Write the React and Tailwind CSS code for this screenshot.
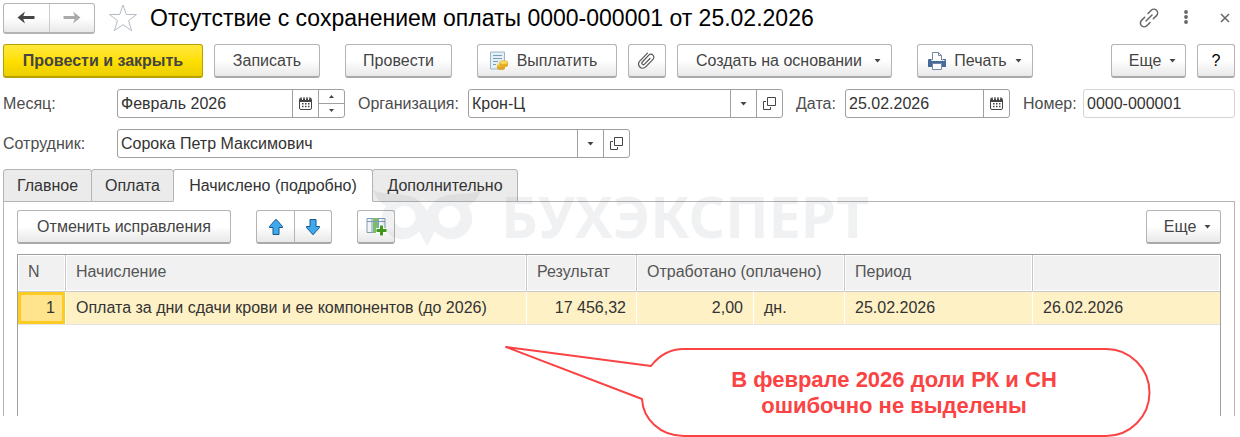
const button =
  'flex h-[34px] items-center justify-center rounded-[3px] border border-[#b4b4b4] border-b-2 border-b-[#a9a9a9] bg-linear-to-b from-white from-50% to-[#e8e8e8] text-base text-[#444]'

const field = 'flex h-[29px] rounded-[3px] border border-[#a0a0a0] bg-white'
const fieldInput = 'min-w-0 flex-1 px-[3px] text-base text-[#333] outline-none'
const fieldButton = 'flex w-[26px] items-center justify-center border-l border-[#a0a0a0]'

const TABS = [
  { title: 'Главное', width: 'w-[89px]' },
  { title: 'Оплата', width: 'w-[83px]' },
  { title: 'Начислено (подробно)', width: 'w-[200px]', active: true },
  { title: 'Дополнительно', width: 'w-[146px]' },
]

function Caret() {
  return (
    <svg width="7" height="4" viewBox="0 0 7 4" fill="#444">
      <path d="M.5 0h6L3.5 3.5z" />
    </svg>
  )
}

function CalendarIcon() {
  return (
    <svg width="13" height="14" viewBox="0 0 13 14">
      <path d="M2 1h9a1.5 1.5 0 0 1 1.5 1.5V11A1.5 1.5 0 0 1 11 12.500H2A1.5 1.5 0 0 1 .5 11V2.500A1.5 1.5 0 0 1 2 1z" fill="#fff" stroke="#444" />
      <path d="M1 1.500h11V5H1z" fill="#444" />
      <path d="M3.500 0v3M6.500 0v3M9.500 0v3" stroke="#fff" />
      <path d="M3 6.800h1.500M6 6.800h1.500M9 6.800h1.500M3 9.500h1.500M6 9.500h1.500M9 9.500h1.500" stroke="#444" strokeWidth="1.600" />
    </svg>
  )
}

function OpenIcon() {
  return (
    <svg width="13" height="13" viewBox="0 0 13 13" fill="none" stroke="#444">
      <path d="M4.500 .5h8v8h-8z" />
      <path d="M3 4.500H.5v8h7V10" />
    </svg>
  )
}

function NavArrow({ color, flip }) {
  return (
    <svg className={flip ? 'rotate-180' : ''} width="18" height="13" viewBox="0 0 18 13">
      <path d="M.5 6.500L8 .5 6.300 5H17.500V8H6.300L8 12.500z" fill={color} />
    </svg>
  )
}

function StarIcon() {
  return (
    <svg width="30" height="28" viewBox="0 0 30 28" fill="none" stroke="#b5bcc6">
      <path d="M15 1l3.300 9.500h10.200l-8 6.200 3.200 10L15 20.600l-8.700 6.100 3.200-10-8-6.200h10.200z" />
    </svg>
  )
}

function LinkIcon() {
  return (
    <svg width="20" height="20" viewBox="0 0 20 20" fill="none" stroke="#666" strokeWidth="1.500" strokeLinecap="round">
      <path d="M7 13l6-6" />
      <path d="M9 5.500l3.200-3.200a3.700 3.700 0 0 1 5.300 5.300L14.300 10.800" />
      <path d="M11 14.500l-3.200 3.200a3.700 3.700 0 0 1-5.300-5.300L5.700 9.200" />
    </svg>
  )
}

function ClipIcon() {
  return (
    <svg width="18" height="18" viewBox="0 0 18 18" fill="none" stroke="#555" strokeWidth="1.200" strokeLinecap="round">
      <path d="M12 6.500l-5.500 5.700a1.500 1.500 0 0 1-2.200-2.200l6.500-6.800a2.900 2.900 0 0 1 4.200 4.200l-7.300 7.500a4.100 4.100 0 0 1-6-5.800L9.500 1.200" />
    </svg>
  )
}

function PayIcon() {
  return (
    <svg width="20" height="20" viewBox="0 0 20 20">
      <path d="M1.500 1h14v17h-14z" fill="#e3f0f8" stroke="#9ab6ca" />
      <path d="M4 4.500h9M4 7.500h9M4 10.500h5M4 13.500h3" stroke="#7d9cb5" />
      <path d="M8 14v3c0 2.600 8 2.600 8 0v-3z" fill="#dfa520" />
      <ellipse cx="12" cy="14" rx="4" ry="1.800" fill="#f6d050" />
      <path d="M10.500 11.500v3c0 2.300 8.500 2.300 8.500 0v-3z" fill="#e5ac22" />
      <ellipse cx="14.700" cy="11.500" rx="4.300" ry="1.900" fill="#fbdc62" stroke="#d09c20" strokeWidth=".5" />
    </svg>
  )
}

function PrinterIcon() {
  return (
    <svg width="18" height="18" viewBox="0 0 18 18">
      <path d="M4.500 8V.5h6l3 3V8" fill="#fff" stroke="#7389a3" />
      <path d="M10.500 .5v3h3" fill="none" stroke="#7389a3" />
      <path d="M1 7h2.500v2h11V7H17a1 1 0 0 1 1 1v7H0V8a1 1 0 0 1 1-1z" fill="#456c98" />
      <path d="M4.500 11.500h9v6h-9z" fill="#fff" stroke="#7389a3" />
      <path d="M15 8.500h1.500" stroke="#fff" />
    </svg>
  )
}

function MoveArrow({ flip }) {
  return (
    <svg className={flip ? 'rotate-180' : ''} width="16" height="18" viewBox="0 0 16 18">
      <path d="M8 1.200l6.500 7.300v1H11v7H5v-7H1.500v-1z" fill="#3fa9ee" stroke="#17578c" strokeLinejoin="round" />
    </svg>
  )
}

function AddColumnIcon() {
  return (
    <svg width="21" height="19" viewBox="0 0 21 19">
      <path d="M1 1.500h18v14H1z" fill="#eef4f8" stroke="#7f9db3" />
      <path d="M7 1h5v15H7z" fill="#7cbc6a" />
      <path d="M1 4.500h18M6 1v15M12.500 1v15" stroke="#7f9db3" />
      <path d="M15.500 8v11M10 13.500h11" stroke="#fff" strokeWidth="5" />
      <path d="M15.500 8.500v10M10.500 13.500h10" stroke="#3f9a1c" strokeWidth="3" />
    </svg>
  )
}

function Watermark() {
  return (
    <div className="pointer-events-none absolute top-[19px] left-[370px] flex items-start gap-5 text-[#1e2337] opacity-[0.06]">
      <svg className="mt-[2px]" width="108" height="56" viewBox="0 0 108 56" fill="currentColor">
        <path
          fillRule="evenodd"
          d="M0 0C12 6 30 2 42 8Q50 13 54 21Q58 13 66 8C78 2 96 6 108 0C105 8 101 13 95 16A20 20 0 0 1 62 41L54 56 46 41A20 20 0 0 1 13 16C7 13 3 8 0 0zM31.500 16a11 11 0 1 0 0 22 11 11 0 0 0 0-22zM76.500 16a11 11 0 1 0 0 22 11 11 0 0 0 0-22z"
        />
      </svg>
      <span className="font-['Noto_Sans',sans-serif] text-[57px] leading-[56px] font-bold">БУХЭКСПЕРТ</span>
    </div>
  )
}

function Callout() {
  return (
    <div className="absolute top-[343px] left-[504px] h-[94px] w-[648px]">
      <svg width="648" height="94" viewBox="0 0 648 94" fill="#fff" stroke="#fb4343" strokeWidth="2">
        <path d="M2 4L147 23Q160 6 180 6H602A43 43 0 0 1 602 93H180C156 93 139 76 138 56z" strokeLinejoin="round" />
      </svg>
      <p className="absolute top-6 right-[78px] left-[210px] text-center text-[22px] leading-[26px] font-bold text-[#fb4343]">
        В феврале 2026 доли РК и СН ошибочно не выделены
      </p>
    </div>
  )
}

function Header() {
  return (
    <header className="flex h-[34px] items-center">
      <div className="flex h-[31px] w-[92px] rounded-[3px] border border-[#b4b4b4] border-b-2 bg-linear-to-b from-white from-50% to-[#e8e8e8]">
        <button aria-label="Назад" className="flex flex-1 items-center justify-center border-r border-[#ccc]">
          <NavArrow color="#444" />
        </button>
        <button aria-label="Вперед" className="flex flex-1 items-center justify-center">
          <NavArrow color="#aaa" flip />
        </button>
      </div>
      <button aria-label="В избранное" className="ml-[13px]"><StarIcon /></button>
      <h1 className="ml-3 flex-1 text-[23px] whitespace-nowrap text-black">Отсутствие с сохранением оплаты 0000-000001 от 25.02.2026</h1>
      <button aria-label="Ссылка"><LinkIcon /></button>
      <button aria-label="Меню" className="ml-6">
        <svg width="6" height="16" viewBox="0 0 6 16" fill="#666">
          <circle cx="3" cy="2" r="1.900" /><circle cx="3" cy="7" r="1.900" /><circle cx="3" cy="12" r="1.900" />
        </svg>
      </button>
      <button aria-label="Закрыть" className="mr-1 ml-[30px]">
        <svg width="12" height="12" viewBox="0 0 12 12" stroke="#666" strokeWidth="1.500"><path d="M2 2l8 8M10 2l-8 8" /></svg>
      </button>
    </header>
  )
}

function Toolbar() {
  return (
    <div className="mt-[9px] flex">
      <button className="flex h-[34px] w-[200px] items-center justify-center rounded-[3px] border border-[#b8a000] border-b-2 bg-linear-to-b from-[#ffe838] via-[#ffe000] to-[#ebcf00] text-base font-bold text-[#444]">
        Провести и закрыть
      </button>
      <button className={`${button} ml-[11px] w-[106px]`}>Записать</button>
      <button className={`${button} ml-[25px] w-[107px]`}>Провести</button>
      <button className={`${button} ml-[25px] w-[140px] gap-2 pr-2`}><PayIcon />Выплатить</button>
      <button aria-label="Файлы" className={`${button} ml-[11px] w-[38px]`}><ClipIcon /></button>
      <button className={`${button} ml-[11px] w-[215px] gap-3 pl-2`}>Создать на основании<Caret /></button>
      <button className={`${button} ml-[25px] w-[116px] gap-2`}><PrinterIcon />Печать<Caret /></button>
      <button className={`${button} ml-auto w-[75px] gap-2 pl-2`}>Еще<Caret /></button>
      <button aria-label="Справка" className={`${button} ml-[11px] w-[38px]`}>
        <span className="text-black">?</span>
      </button>
    </div>
  )
}

function Fields() {
  return (
    <div className="mt-[11px] flex flex-col gap-[11px] text-base text-[#4d4d4d]">
      <div className="flex items-center">
        <label htmlFor="month" className="w-[114px]">Месяц:</label>
        <div className={`${field} w-[228px]`}>
          <input id="month" className={fieldInput} defaultValue="Февраль 2026" />
          <button aria-label="Выбрать месяц" className={fieldButton}><CalendarIcon /></button>
          <div className="flex w-[26px] flex-col border-l border-[#a0a0a0]">
            <button aria-label="Следующий месяц" className="flex flex-1 items-center justify-center border-b border-[#a0a0a0]">
              <svg width="5" height="3" viewBox="0 0 5 3" fill="#444"><path d="M0 3h5L2.500 0z" /></svg>
            </button>
            <button aria-label="Предыдущий месяц" className="flex flex-1 items-center justify-center">
              <svg width="5" height="3" viewBox="0 0 5 3" fill="#444"><path d="M0 0h5L2.500 3z" /></svg>
            </button>
          </div>
        </div>
        <label htmlFor="org" className="ml-[13px] w-[110px]">Организация:</label>
        <div className={`${field} min-w-0 flex-1`}>
          <input id="org" className={fieldInput} defaultValue="Крон-Ц" />
          <button aria-label="Список организаций" className={fieldButton}><Caret /></button>
          <button aria-label="Открыть организацию" className={fieldButton}><OpenIcon /></button>
        </div>
        <label htmlFor="date" className="ml-[13px] w-[49px]">Дата:</label>
        <div className={`${field} w-[165px]`}>
          <input id="date" className={fieldInput} defaultValue="25.02.2026" />
          <button aria-label="Выбрать дату" className={fieldButton}><CalendarIcon /></button>
        </div>
        <label htmlFor="number" className="ml-[13px] w-[60px]">Номер:</label>
        <input id="number" className="h-[29px] w-[152px] rounded-[3px] border border-[#d4d4d4] px-[3px] text-base text-[#333] outline-none" defaultValue="0000-000001" />
      </div>
      <div className="flex items-center">
        <label htmlFor="employee" className="w-[114px]">Сотрудник:</label>
        <div className={`${field} w-[513px]`}>
          <input id="employee" className={fieldInput} defaultValue="Сорока Петр Максимович" />
          <button aria-label="Список сотрудников" className={fieldButton}><Caret /></button>
          <button aria-label="Открыть сотрудника" className={fieldButton}><OpenIcon /></button>
        </div>
      </div>
    </div>
  )
}

function Tabs() {
  return (
    <div role="tablist" className="flex text-base text-[#333]">
      {TABS.map(tab => (
        <button
          key={tab.title}
          role="tab"
          aria-selected={!!tab.active}
          className={`-mr-px h-[33px] rounded-t-[3px] border border-[#b4b4b4] whitespace-nowrap ${tab.width} ${tab.active ? 'z-10 border-b-white bg-white' : 'bg-[#ebebeb]'}`}
        >
          {tab.title}
        </button>
      ))}
    </div>
  )
}

function AccrualsTable() {
  const th = 'border-r border-[#c8c8c8] bg-[#f1f1f1] px-[10px] pb-[2px] text-left font-normal shadow-[inset_0_0_0_1px_white] last:border-r-0'
  const td = 'border-r border-r-white px-[10px] last:border-r-0'

  return (
    <div className="mt-[10px] flex-1 border border-b-0 border-[#a0a0a0]">
      <table className="w-full table-fixed border-separate border-spacing-0 text-base">
        <colgroup>
          <col className="w-[48px]" />
          <col />
          <col className="w-[110px]" />
          <col className="w-[117px]" />
          <col className="w-[91px]" />
          <col className="w-[188px]" />
          <col className="w-[187px]" />
        </colgroup>
        <thead className="text-[#555]">
          <tr className="h-[36px]">
            <th className={th}>N</th>
            <th className={th}>Начисление</th>
            <th className={th}>Результат</th>
            <th className={th} colSpan={2}>Отработано (оплачено)</th>
            <th className={th}>Период</th>
            <th className={th} aria-label="Конец периода" />
          </tr>
        </thead>
        <tbody className="text-[#333]">
          <tr className="h-[34px] bg-[#fef1c6] *:border-t *:border-t-[#c8c8c8] *:border-b *:border-b-[#e4e4e4]">
            <td className={`${td} bg-[#ffe48d] text-right shadow-[inset_0_0_0_3px_#fbcb22]`}>1</td>
            <td className={`${td} whitespace-nowrap`}>Оплата за дни сдачи крови и ее компонентов (до 2026)</td>
            <td className={`${td} text-right`}>17 456,32</td>
            <td className={`${td} text-right`}>2,00</td>
            <td className={td}>дн.</td>
            <td className={td}>25.02.2026</td>
            <td className={td}>26.02.2026</td>
          </tr>
        </tbody>
      </table>
    </div>
  )
}

export default function App() {
  return (
    <div className="relative bg-white pt-px pr-[5px] pb-[21px] pl-[3px] font-['Liberation_Sans',Arial,sans-serif]">
      <Header />
      <Toolbar />
      <Fields />
      <main className="relative mt-[11px]">
        <Tabs />
        <section className="-mt-px flex min-h-[215px] flex-col border border-b-0 border-[#b4b4b4] px-[13px] pt-2">
          <div className="flex">
            <button className={`${button} w-[214px]`}>Отменить исправления</button>
            <div className="ml-[25px] flex">
              <button aria-label="Вверх" className={`${button} w-[39px] rounded-r-none`}><MoveArrow /></button>
              <button aria-label="Вниз" className={`${button} -ml-px w-[38px] rounded-l-none`}><MoveArrow flip /></button>
            </div>
            <button aria-label="Добавить колонку" className={`${button} ml-[25px] w-[38px]`}><AddColumnIcon /></button>
            <button className={`${button} ml-auto w-[75px] gap-2 pl-2`}>Еще<Caret /></button>
          </div>
          <AccrualsTable />
        </section>
        <Watermark />
      </main>
      <Callout />
    </div>
  )
}
